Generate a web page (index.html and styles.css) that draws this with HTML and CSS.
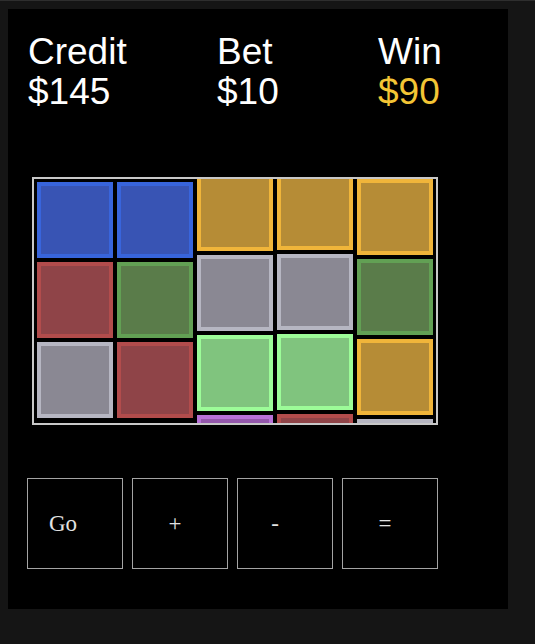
FILE: index.html
```html
<!DOCTYPE html>
<html lang="en">
<head>
    <meta charset="UTF-8">
    <meta name="viewport" content="width=device-width, initial-scale=1.0">
    <title>Slots</title>
    <link rel="stylesheet" href="styles.css">
</head>
<body>
    <div class="slot-machine">
        <div class="stats">
            <div class="stat">
                <div class="stat-label">Credit</div>
                <div class="stat-value">$145</div>
            </div>
            <div class="stat">
                <div class="stat-label">Bet</div>
                <div class="stat-value">$10</div>
            </div>
            <div class="stat">
                <div class="stat-label">Win</div>
                <div class="stat-value win">$90</div>
            </div>
        </div>

        <div class="reels">
            <div class="reel" style="margin-top: 0px">
                <div class="tile blue"></div>
                <div class="tile red"></div>
                <div class="tile gray"></div>
            </div>
            <div class="reel" style="margin-top: 0px">
                <div class="tile blue"></div>
                <div class="tile green"></div>
                <div class="tile red"></div>
            </div>
            <div class="reel" style="margin-top: -7px">
                <div class="tile orange"></div>
                <div class="tile gray"></div>
                <div class="tile lime"></div>
                <div class="tile purple"></div>
            </div>
            <div class="reel" style="margin-top: -8px">
                <div class="tile orange"></div>
                <div class="tile gray"></div>
                <div class="tile lime"></div>
                <div class="tile red"></div>
            </div>
            <div class="reel" style="margin-top: -3px">
                <div class="tile orange"></div>
                <div class="tile green"></div>
                <div class="tile orange"></div>
                <div class="tile gray"></div>
            </div>
        </div>

        <div class="controls">
            <button class="control go">Go</button>
            <button class="control">+</button>
            <button class="control minus">-</button>
            <button class="control">=</button>
        </div>
    </div>
</body>
</html>
```

FILE: styles.css
```css
html {
    background-color: #151515;
    border-top: 1px solid #2e2e2e;
}

body {
    margin: 8px;
}

.slot-machine {
    width: 500px;
    height: 600px;
    box-sizing: border-box;
    padding: 23px 0 0 20px;
    background-color: #000;
}

.stats {
    display: grid;
    grid-template-columns: 189px 161px auto;
    font-family: "Liberation Sans", Arial, sans-serif;
    font-size: 37px;
    line-height: 40px;
    color: #fff;
}

.stat-value.win {
    color: #f3c535;
}

.reels {
    display: flex;
    align-items: flex-start;
    width: 400px;
    height: 241px;
    margin: 65px 0 0 4px;
    padding: 1px 1px 2px;
    border: 2px solid #c8c8c8;
    overflow: hidden;
}

.reel {
    display: flex;
    flex-direction: column;
    width: 80px;
    flex-shrink: 0;
}

.tile {
    width: 76px;
    height: 76px;
    margin: 2px;
    box-sizing: border-box;
    border: 4px solid;
}

.blue {
    border-color: #3865dc;
    background-color: #3854b4;
}

.red {
    border-color: #b24c4c;
    background-color: #8f4448;
}

.gray {
    border-color: #b6b6c2;
    background-color: #8a8893;
}

.green {
    border-color: #62a054;
    background-color: #5a7c4a;
}

.orange {
    border-color: #f0b53a;
    background-color: #b68c36;
}

.lime {
    border-color: #9cfc98;
    background-color: #80c47e;
}

.purple {
    border-color: #b872d8;
    background-color: #9458ac;
}

.controls {
    display: flex;
    gap: 9px;
    margin: 53px 0 0 -1px;
}

.control {
    width: 96px;
    height: 91px;
    padding: 0 10px 0 0;
    background-color: #000;
    border: 1px solid #a4a4a4;
    color: #e2e2e2;
    font-family: "Liberation Serif", "Times New Roman", serif;
    font-size: 23px;
}

.control.go {
    padding-right: 24px;
}

.control.minus {
    padding-right: 20px;
}
```
